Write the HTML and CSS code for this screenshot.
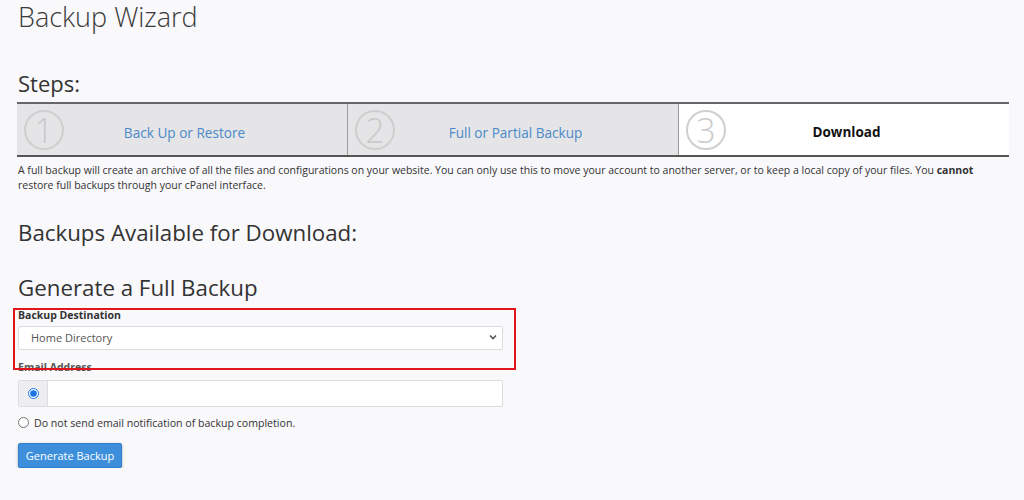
FILE: index.html
```html
<!DOCTYPE html>
<html lang="en">
<head>
    <meta charset="UTF-8">
    <title>Backup Wizard</title>
    <link rel="stylesheet" href="styles.css">
</head>
<body>
    <div class="container">
        <h1>Backup Wizard</h1>

        <h2 class="steps-title">Steps:</h2>
        <div class="steps">
            <div class="step">
                <span class="step-num">1</span>
                <a href="#" class="step-label">Back Up or Restore</a>
            </div>
            <div class="step">
                <span class="step-num">2</span>
                <a href="#" class="step-label">Full or Partial Backup</a>
            </div>
            <div class="step current">
                <span class="step-num">3</span>
                <span class="step-label">Download</span>
            </div>
        </div>

        <p class="intro">A full backup will create an archive of all the files and configurations on your website. You can only use this to move your account to another server, or to keep a local copy of your files. You <b>cannot</b> restore full backups through your cPanel interface.</p>

        <h2 class="section-title">Backups Available for Download:</h2>

        <h2 class="section-title generate">Generate a Full Backup</h2>

        <form class="backup-form">
            <label for="dest" class="field-label">Backup Destination</label>
            <div class="select-wrap">
                <select id="dest">
                    <option>Home Directory</option>
                </select>
                <svg class="chevron" width="8" height="6" viewBox="0 0 8 6"><path d="M1 1.5 L4 4.5 L7 1.5" fill="none" stroke="#555" stroke-width="1.6"/></svg>
            </div>

            <label for="email" class="field-label">Email Address</label>
            <div class="input-group">
                <span class="addon"><input type="radio" name="notify" checked></span>
                <input type="text" id="email">
            </div>

            <label class="radio-row"><input type="radio" name="notify"> Do not send email notification of backup completion.</label>

            <button type="button" class="btn-primary">Generate Backup</button>

            <!-- annotation box drawn over the destination field -->
            <div class="highlight"></div>
        </form>
    </div>
</body>
</html>
```

FILE: styles.css
```css
body { font-family: "Open Sans", Arial, sans-serif; margin: 0; background: #f9f8fb; color: #333; }
.container { padding: 0 15px 0 18px; }

h1 { font-size: 27px; font-weight: 300; margin: 0; line-height: 34px; color: #3a3a3a; }

.steps-title { font-size: 22px; font-weight: 400; margin: 34px 0 0; line-height: 30px; color: #333; }
.steps { display: flex; margin: 4px 0 0 -1px; border-top: 2px solid #666; border-bottom: 2px solid #555; }
.step { flex: 1; display: flex; align-items: center; height: 51px; background: #e5e4e6; border-left: 1px solid #9a9a9a; }
.step:first-child { border-left: none; }
.step.current { background: #fff; border-left: 1px solid #999; }
.step-num { width: 36px; height: 36px; border: 2px solid #cfcfcf; border-radius: 50%; color: #cacaca; font-size: 34px; font-weight: 300; line-height: 36px; text-align: center; margin-left: 7px; flex-shrink: 0; }
.step-label { flex: 1; text-align: center; font-size: 13.6px; color: #4a8ac9; text-decoration: none; padding: 5px 42px 0 0; }
.step.current .step-label { color: #111; font-weight: 700; font-size: 13.5px; padding-top: 4px; }

.intro { font-size: 10.5px; line-height: 15px; margin: 6px 0 0; color: #333; }
.intro b { font-weight: 700; }

.section-title { font-size: 22.3px; font-weight: 400; margin: 25px 0 0; line-height: 30px; color: #333; }
.generate { margin-top: 25px; }

.backup-form { position: relative; width: 485px; }
.highlight { position: absolute; left: -5px; top: 0; width: 499px; height: 58px; border: 2px solid #e0161c; }
.field-label { display: block; font-size: 10.5px; font-weight: 700; line-height: 14px; margin-top: 5px; color: #333; }
.select-wrap { position: relative; margin-top: 3px; }
select { width: 100%; height: 24px; border: 1px solid #ddd; border-radius: 2px; background: #fff; font-family: inherit; font-size: 11px; color: #555; padding: 0 12px; appearance: none; -webkit-appearance: none; }
.chevron { position: absolute; right: 6px; top: 9px; }
.select-wrap + .field-label { margin-top: 10px; color: #555; }

.input-group { display: flex; height: 25px; margin-top: 6px; border: 1px solid #ddd; border-radius: 2px; background: #fff; }
.addon { width: 28px; background: #eeedf0; border-right: 1px solid #ddd; display: flex; align-items: center; justify-content: center; }
.addon input { margin: 0; width: 11px; height: 11px; accent-color: #1a73e8; }
.input-group input[type=text] { flex: 1; border: none; outline: none; background: transparent; }

.radio-row { display: flex; align-items: center; gap: 5px; font-size: 10.6px; color: #333; margin-top: 9px; }
.radio-row input { margin: 0; width: 11px; height: 11px; }

.btn-primary { display: block; margin-top: 13px; width: 104px; height: 25px; background: #3d8fdc; color: #fff; border: 1px solid #2f7fcc; border-radius: 2px; font-family: inherit; font-size: 11px; box-shadow: 0 1px 3px rgba(0,0,0,0.3); padding: 0; }
```
